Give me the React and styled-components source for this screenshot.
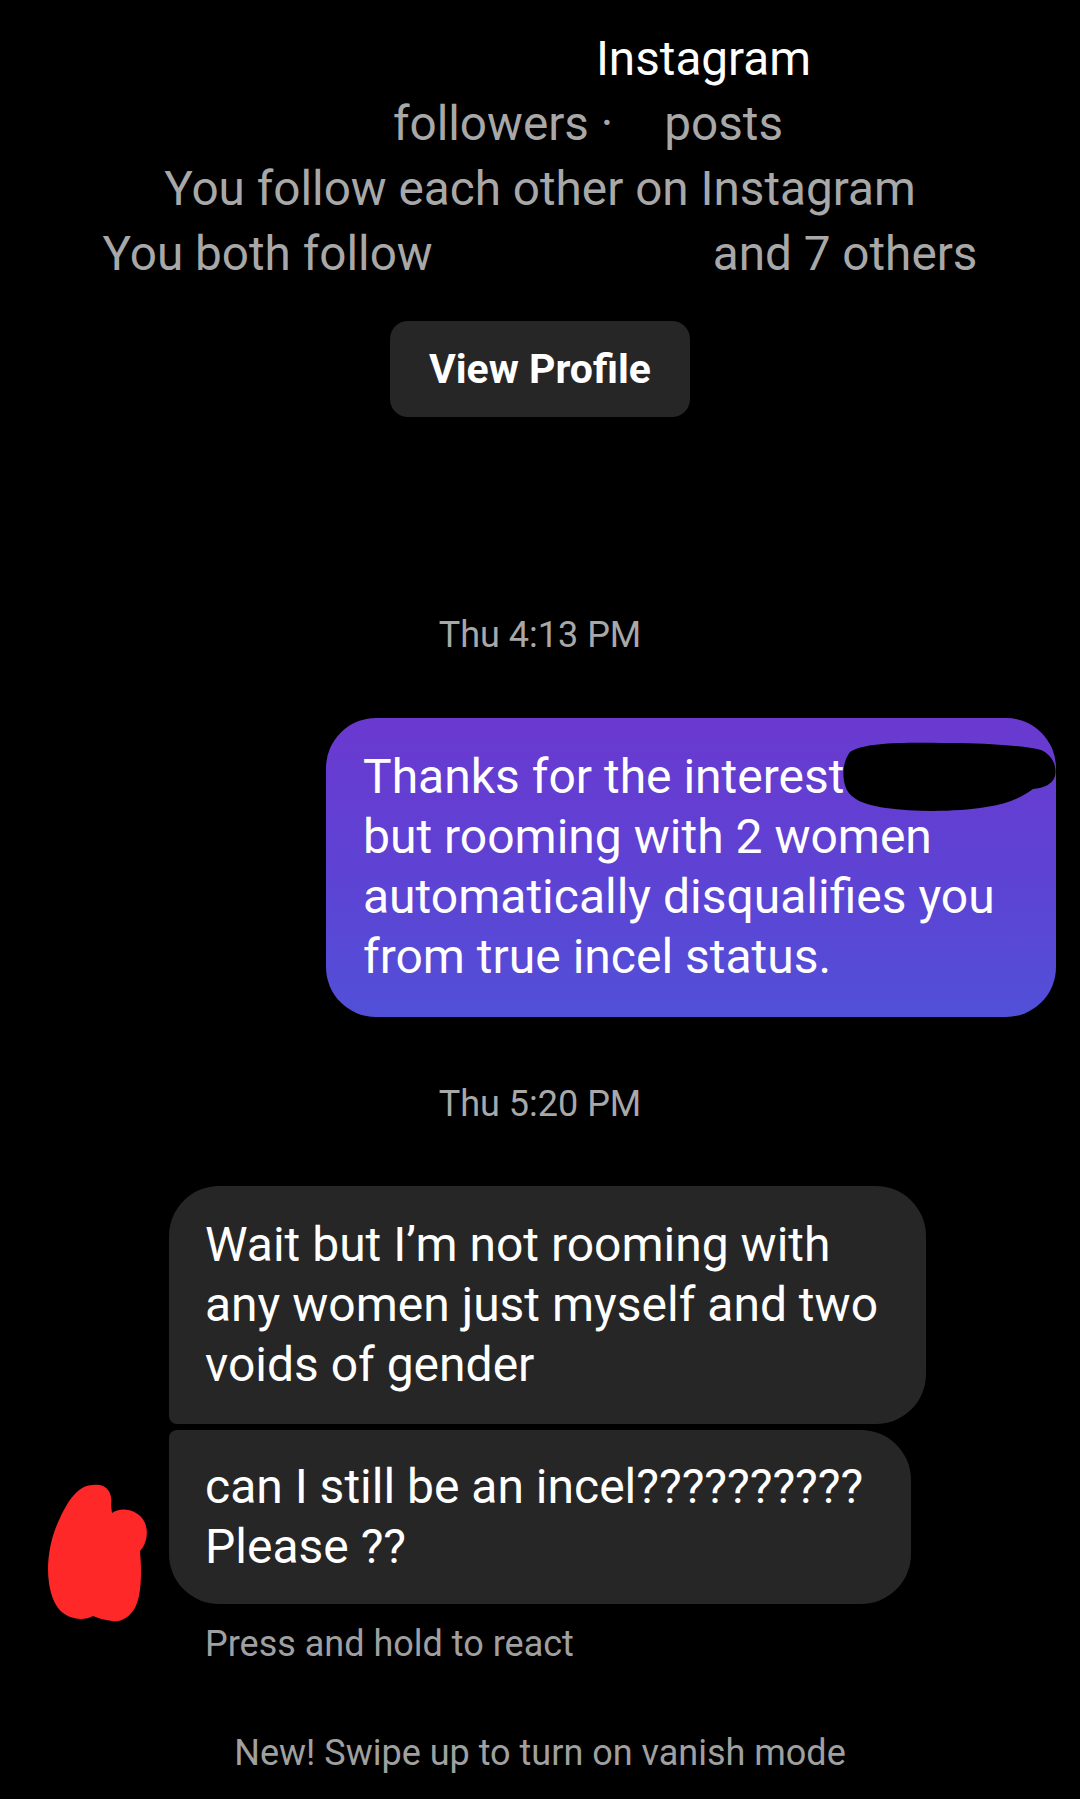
import React from "react";
import styled, { createGlobalStyle } from "styled-components";

const GlobalStyle = createGlobalStyle`
  html, body {
    margin: 0;
    padding: 0;
    background: #000000;
  }
  body {
    font-family: Roboto, "Noto Sans", "Liberation Sans", sans-serif;
    -webkit-font-smoothing: antialiased;
  }
`;

const Page = styled.div`
  width: 1080px;
  min-height: 1799px;
  background: #000000;
  display: flex;
  flex-direction: column;
  padding-top: 27px;
  box-sizing: border-box;
  overflow: hidden;
`;

const ProfileHeader = styled.header`
  display: flex;
  flex-direction: column;
  align-items: center;
`;

const HeaderLine = styled.div`
  font-size: 47.7px;
  line-height: 65px;
  white-space: nowrap;
  color: ${(p) => (p.$tone === "white" ? "#ffffff" : "#a8a8a8")};
`;

const Redact = styled.span`
  display: inline-block;
  width: ${(p) => p.$w}px;
  height: 1em;
  background: #000000;
  vertical-align: middle;
`;

const ViewProfileButton = styled.button`
  margin-top: 34px;
  width: 300px;
  height: 96px;
  border: none;
  border-radius: 18px;
  background: #262626;
  color: #ffffff;
  font-family: Roboto, "Noto Sans", "Liberation Sans", sans-serif;
  font-size: 41px;
  font-weight: 700;
  cursor: pointer;
`;

const Timestamp = styled.div`
  margin-top: ${(p) => p.$mt}px;
  text-align: center;
  font-size: 36px;
  line-height: 44px;
  color: #a8a8a8;
`;

const OutgoingRow = styled.div`
  margin-top: 61px;
  display: flex;
  justify-content: flex-end;
  padding-right: 24px;
`;

const OutgoingBubble = styled.div`
  position: relative;
  width: 730px;
  box-sizing: border-box;
  padding: 29px 37px 30px 37px;
  border-radius: 50px;
  background: linear-gradient(180deg, #6a39d0 0%, #5e42d3 50%, #5150d8 100%);
  color: #ffffff;
  font-size: 48px;
  line-height: 60px;
  white-space: nowrap;
`;

const Scribble = styled.svg`
  position: absolute;
  left: 0;
  top: 0;
  width: 740px;
  height: 120px;
  overflow: visible;
  pointer-events: none;
`;

const IncomingGroup = styled.div`
  margin-top: 60px;
  display: flex;
  flex-direction: column;
  gap: 6px;
`;

const IncomingRow = styled.div`
  display: flex;
  align-items: flex-start;
`;

const AvatarSlot = styled.div`
  position: relative;
  width: 169px;
  flex-shrink: 0;
  align-self: stretch;
`;

const AvatarBlob = styled.svg`
  position: absolute;
  left: 30px;
  top: 33px;
  width: 160px;
  height: 180px;
  overflow: visible;
`;

const radii = {
  first: "50px 50px 50px 8px",
  last: "8px 50px 50px 50px",
};

const IncomingBubble = styled.div`
  box-sizing: border-box;
  padding: ${(p) => (p.$pos === "last" ? "27px 48px 27px 36px" : "29px 48px 29px 36px")};
  border-radius: ${(p) => radii[p.$pos]};
  background: #262626;
  color: #ffffff;
  font-size: 48px;
  line-height: 60px;
  white-space: nowrap;
`;

const Hint = styled.div`
  margin-top: 18px;
  padding-left: 205px;
  font-size: 36px;
  line-height: 44px;
  color: #a0a0a0;
`;

const VanishNote = styled.div`
  margin-top: 65px;
  text-align: center;
  font-size: 36px;
  line-height: 44px;
  color: #a0a0a0;
`;

export default function App() {
  return (
    <>
      <GlobalStyle />
      <Page>
        <ProfileHeader>
          <HeaderLine $tone="white">
            <Redact $w={327} />
            Instagram
          </HeaderLine>
          <HeaderLine>
            <Redact $w={96} />
            followers ·<Redact $w={51} />
            posts
          </HeaderLine>
          <HeaderLine>You follow each other on Instagram</HeaderLine>
          <HeaderLine>
            You both follow
            <Redact $w={280} />
            and 7 others
          </HeaderLine>
          <ViewProfileButton>View Profile</ViewProfileButton>
        </ProfileHeader>

        <Timestamp $mt={196}>Thu 4:13 PM</Timestamp>

        <OutgoingRow>
          <OutgoingBubble>
            Thanks for the interest
            <br />
            but rooming with 2 women
            <br />
            automatically disqualifies you
            <br />
            from true incel status.
            <Scribble viewBox="0 0 740 120">
              <path
                d="M 524 34 C 540 22, 600 25, 634 25 C 670 26, 700 28, 715 32 C 728 38, 731 50, 729 58 C 727 66, 718 70, 707 71 C 695 80, 680 86, 660 89 C 630 94, 590 94, 560 90 C 540 87, 525 82, 520 70 C 516 60, 516 45, 524 34 Z"
                fill="#000000"
              />
            </Scribble>
          </OutgoingBubble>
        </OutgoingRow>

        <Timestamp $mt={65}>Thu 5:20 PM</Timestamp>

        <IncomingGroup>
          <IncomingRow>
            <AvatarSlot />
            <IncomingBubble $pos="first">
              Wait but I’m not rooming with
              <br />
              any women just myself and two
              <br />
              voids of gender
            </IncomingBubble>
          </IncomingRow>
          <IncomingRow>
            <AvatarSlot>
              <AvatarBlob viewBox="0 0 160 180">
                <path
                  d="M 63 22 C 75 20, 83 28, 81 42 L 82 50 C 90 44, 108 45, 115 60 C 119 70, 116 82, 110 88 C 112 110, 111 130, 107 140 C 103 152, 92 160, 82 158 C 74 157, 68 155, 63 153 C 58 156, 50 157, 44 155 C 30 152, 22 140, 19 120 C 16 100, 20 75, 30 55 C 38 38, 48 22, 63 22 Z"
                  fill="#ff2828"
                />
              </AvatarBlob>
            </AvatarSlot>
            <IncomingBubble $pos="last">
              can I still be an incel??????????
              <br />
              Please ??
            </IncomingBubble>
          </IncomingRow>
        </IncomingGroup>

        <Hint>Press and hold to react</Hint>
        <VanishNote>New! Swipe up to turn on vanish mode</VanishNote>
      </Page>
    </>
  );
}
